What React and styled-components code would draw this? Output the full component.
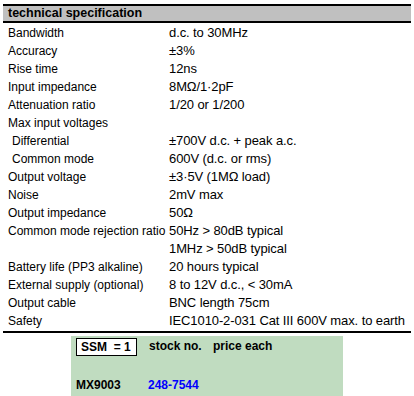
import styled, { createGlobalStyle } from 'styled-components';

const GlobalStyle = createGlobalStyle`
  body {
    margin: 0;
    background: #ffffff;
    font-family: "Liberation Sans", Arial, sans-serif;
    color: #000000;
  }
`;

const Page = styled.div`
  padding: 4px 0 0 3px;
  width: 408px;
`;

const Header = styled.div`
  background: #c0c0c0;
  border-top: 2px solid #000;
  border-bottom: 2px solid #000;
  height: 15px;
  line-height: 15px;
  padding-left: 5px;
  font-weight: bold;
  font-size: 12.5px;
`;

const SpecTable = styled.div`
  display: grid;
  grid-template-columns: 161px 1fr;
  grid-auto-rows: 18px;
  padding: 1px 0 1px 5px;
  border-bottom: 2px solid #000;
  line-height: 18px;
`;

const Label = styled.div`
  padding-left: ${props => (props.$indent ? '4px' : '0')};
  font-size: 12px;
  white-space: nowrap;
`;

const Value = styled.div`
  font-size: 13px;
  letter-spacing: -0.1px;
  white-space: nowrap;
`;

const OrderBox = styled.div`
  margin: 3px 0 0 68px;
  width: 272px;
  height: 62px;
  background: #c0dcc0;
  font-weight: bold;
  font-size: 12px;
  display: grid;
  grid-template-columns: 77px 64px 1fr;
  grid-template-rows: 36px 26px;
  align-items: start;
`;

const SsmBadge = styled.div`
  margin: 2px 0 0 5px;
  width: 61px;
  height: 18px;
  border: 1px solid #000;
  background: #fff;
  box-sizing: border-box;
  font-size: 12px;
  line-height: 16px;
  padding-left: 4px;
  white-space: pre;
`;

const HeadCell = styled.div`
  padding: 3px 0 0 1px;
  white-space: nowrap;
`;

const Cell = styled.div`
  padding-left: ${props => props.$pad || '0'};
  color: ${props => props.$color || '#000'};
  white-space: nowrap;
  align-self: center;
`;

const specs = [
  ['Bandwidth', 'd.c. to 30MHz'],
  ['Accuracy', '±3%'],
  ['Rise time', '12ns'],
  ['Input impedance', '8MΩ/1·2pF'],
  ['Attenuation ratio', '1/20 or 1/200'],
  ['Max input voltages', ''],
  ['Differential', '±700V d.c. + peak a.c.', true],
  ['Common mode', '600V (d.c. or rms)', true],
  ['Output voltage', '±3·5V (1MΩ load)'],
  ['Noise', '2mV max'],
  ['Output impedance', '50Ω'],
  ['Common mode rejection ratio', '50Hz > 80dB typical'],
  ['', '1MHz > 50dB typical'],
  ['Battery life (PP3 alkaline)', '20 hours typical'],
  ['External supply (optional)', '8 to 12V d.c., < 30mA'],
  ['Output cable', 'BNC length 75cm'],
  ['Safety', 'IEC1010-2-031 Cat III 600V max. to earth'],
];

export default function App() {
  return (
    <Page>
      <GlobalStyle />
      <Header>technical specification</Header>
      <SpecTable>
        {specs.flatMap(([label, value, indent], i) => [
          <Label key={'l' + i} $indent={indent}>{label}</Label>,
          <Value key={'v' + i}>{value}</Value>,
        ])}
      </SpecTable>
      <OrderBox>
        <SsmBadge>{'SSM  = 1'}</SsmBadge>
        <HeadCell>stock no.</HeadCell>
        <HeadCell>price each</HeadCell>
        <Cell $pad="5px">MX9003</Cell>
        <Cell $color="#0000ff">248-7544</Cell>
        <Cell />
      </OrderBox>
    </Page>
  );
}
